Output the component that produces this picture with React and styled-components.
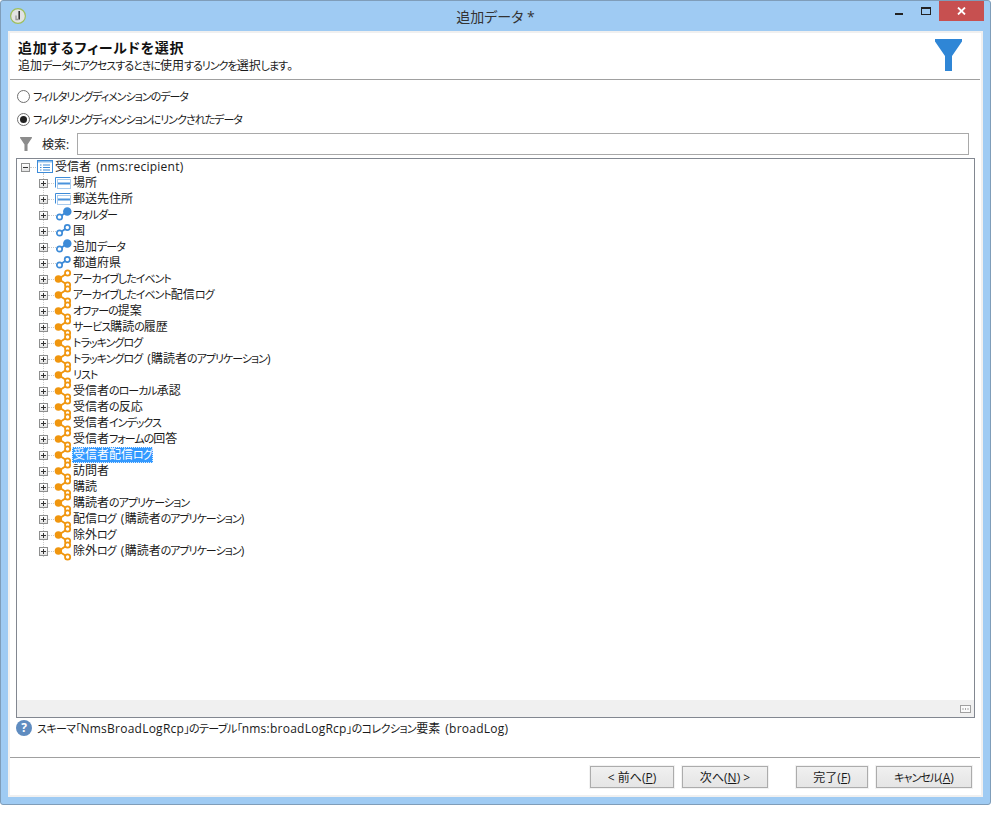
import React from 'react';
import styled, { createGlobalStyle } from 'styled-components';

const GlobalStyle = createGlobalStyle`
  html, body {
    margin: 0;
    padding: 0;
    background: #fff;
  }
  body {
    font-family: "Open Sans", "Noto Sans CJK JP", sans-serif;
    font-size: 12px;
    color: #1a1a1a;
    font-feature-settings: "palt";
  }
`;

const Window = styled.div`
  box-sizing: border-box;
  width: 991px;
  height: 805px;
  display: flex;
  flex-direction: column;
  background: #9fcbf3;
  border: 1px solid #7f9db9;
  border-radius: 3px;
  padding: 0 7px 7px;
`;

const TitleBar = styled.div`
  height: 30px;
  flex: none;
  display: grid;
  grid-template-columns: 1fr auto 1fr;
  align-items: center;
`;

const AppIcon = styled.span`
  display: flex;
  margin-left: 2px;
`;

const TitleText = styled.div`
  font-size: 14px;
  color: #333;
`;

const WinButtons = styled.div`
  display: flex;
  align-self: flex-start;
  justify-self: end;
  margin-right: -1px;
`;

const WinBtn = styled.div`
  width: 27px;
  height: 20px;
  display: flex;
  align-items: center;
  justify-content: center;
`;

const CloseBtn = styled(WinBtn)`
  width: 45px;
  background: #c75050;
`;

const Panel = styled.div`
  flex: 1;
  min-height: 0;
  display: flex;
  flex-direction: column;
  background: #fff;
  border: 2px solid #f0f0f0;
`;

const Header = styled.div`
  box-sizing: border-box;
  height: 47px;
  flex: none;
  display: flex;
  justify-content: space-between;
  border-bottom: 1px solid #a0a0a0;
  padding-left: 8px;
  margin-right: 1px;
`;

const HeaderText = styled.div`
  padding-top: 5px;
`;

const Heading = styled.div`
  font-size: 14px;
  line-height: 20px;
  font-weight: 700;
  letter-spacing: 0.7px;
  color: #111;
`;

const SubHeading = styled.div`
  font-size: 12px;
  line-height: 16px;
`;

const FunnelBox = styled.div`
  padding: 6px 18px 0 0;
`;

const Body = styled.div`
  flex: 1;
  min-height: 0;
  display: flex;
  flex-direction: column;
  padding: 0 6px;
`;

const RadioRow = styled.label`
  height: 22px;
  display: flex;
  align-items: center;
  gap: 3px;
  padding-left: 1px;
  flex: none;
  margin-top: ${({ first }) => (first ? '5px' : '1px')};
`;

const RadioDot = styled.span`
  box-sizing: border-box;
  width: 13px;
  height: 13px;
  border: 1px solid #707070;
  border-radius: 50%;
  background: #fff;
  display: flex;
  align-items: center;
  justify-content: center;
  flex: none;
  &::after {
    content: '';
    width: 7px;
    height: 7px;
    border-radius: 50%;
    background: ${({ checked }) => (checked ? '#222' : 'transparent')};
  }
`;

const SearchRow = styled.div`
  height: 22px;
  display: flex;
  align-items: center;
  padding-right: 6px;
  flex: none;
  margin-top: 3px;
`;

const SearchFunnel = styled.span`
  width: 13px;
  display: flex;
  margin-left: 4px;
`;

const SearchLabel = styled.span`
  margin-left: 9px;
  width: 35px;
  flex: none;
`;

const SearchInput = styled.div`
  box-sizing: border-box;
  flex: 1;
  height: 22px;
  border: 1px solid #a9a9a9;
  background: #fff;
`;

const TreeBox = styled.div`
  box-sizing: border-box;
  height: 560px;
  margin-top: 3px;
  flex: none;
  border: 1px solid #828790;
  display: flex;
  flex-direction: column;
`;

const TreeScroll = styled.div`
  flex: 1;
  min-height: 0;
  position: relative;
  overflow: hidden;
`;

const GuideLine = styled.div`
  position: absolute;
  left: 26px;
  top: 14px;
  height: 384px;
  border-left: 1px dotted #c8c8c8;
`;

const TreeRow = styled.div`
  height: 16px;
  display: flex;
  align-items: center;
  position: relative;
  padding-left: ${({ child }) => (child ? '22px' : '4px')};
  white-space: nowrap;
  word-spacing: 2px;
  &::before {
    content: '';
    position: absolute;
    left: ${({ child }) => (child ? '31px' : '13px')};
    top: 8px;
    width: 8px;
    border-top: 1px dotted #c8c8c8;
  }
`;

const Expander = styled.span`
  box-sizing: border-box;
  width: 9px;
  height: 9px;
  border: 1px solid #8e8f8f;
  background: linear-gradient(#fff, #e3e3e3);
  position: relative;
  flex: none;
  margin-right: 7px;
  z-index: 1;
  &::before {
    content: '';
    position: absolute;
    left: 1px;
    top: 3px;
    width: 5px;
    height: 1px;
    background: #333;
  }
  &::after {
    content: '';
    position: absolute;
    left: 3px;
    top: 1px;
    width: 1px;
    height: 5px;
    background: #333;
    display: ${({ open }) => (open ? 'none' : 'block')};
  }
`;

const IconSlot = styled.span`
  width: 17px;
  height: 16px;
  flex: none;
  position: relative;
  z-index: 1;
  svg {
    position: absolute;
    left: 0;
    top: -1px;
    overflow: visible;
  }
`;

const RowLabel = styled.span`
  display: block;
  height: 16px;
  line-height: 16px;
  padding: 0 1px;
  position: relative;
  z-index: 2;
  ${({ selected }) =>
    selected &&
    `
    background: #3399ff;
    color: #fff;
    outline: 1px dotted #d8ecff;
    outline-offset: -1px;
  `}
`;

const Kana = styled.span`
  font-size: 11px;
  letter-spacing: ${({ tight }) => (tight ? '-0.6px' : '-1px')};
`;

const Latin = styled.span`
  letter-spacing: 0.25px;
`;

const StatusBand = styled.div`
  height: 17px;
  flex: none;
  background: #f0f0f0;
  display: flex;
  justify-content: flex-end;
  align-items: center;
  padding-right: 3px;
`;

const MoreBtn = styled.span`
  display: flex;
`;

const HelpRow = styled.div`
  display: flex;
  align-items: center;
  gap: 5px;
  height: 20px;
  white-space: pre;
  word-spacing: 2px;
  flex: none;
`;

const HelpIcon = styled.span`
  width: 16px;
  height: 16px;
  border-radius: 50%;
  background: #5f8cc0;
  color: #fff;
  font-weight: 700;
  font-size: 12px;
  line-height: 16px;
  text-align: center;
  flex: none;
`;

const Footer = styled.div`
  box-sizing: border-box;
  height: 38px;
  flex: none;
  border-top: 1px solid #a0a0a0;
  display: flex;
  align-items: flex-start;
  justify-content: flex-end;
  padding: 8px 8px 0 0;
  margin: auto 1px 0 0;
`;

const Button = styled.button`
  box-sizing: border-box;
  width: ${({ w }) => w}px;
  height: 22px;
  margin-left: ${({ gap }) => gap}px;
  padding: 0;
  border: 1px solid #acacac;
  box-shadow: 0 0 0 1px #f2f2f2;
  background: linear-gradient(#f0f0f0, #e5e5e5);
  font: inherit;
  color: #1a1a1a;
  font-feature-settings: "palt";
  u {
    text-underline-offset: 1px;
  }
`;

const rows = [
  ['場所', 'record'],
  ['郵送先住所', 'record'],
  ['フォルダー', 'linkFill'],
  ['国', 'link'],
  ['追加データ', 'linkFill'],
  ['都道府県', 'link'],
  ['アーカイブしたイベント', 'multi'],
  ['アーカイブしたイベント配信ログ', 'multi'],
  ['オファーの提案', 'multi'],
  ['サービス購読の履歴', 'multi'],
  ['トラッキングログ', 'multi'],
  ['トラッキングログ (購読者のアプリケーション)', 'multi'],
  ['リスト', 'multi'],
  ['受信者のローカル承認', 'multi'],
  ['受信者の反応', 'multi'],
  ['受信者インデックス', 'multi'],
  ['受信者フォームの回答', 'multi'],
  ['受信者配信ログ', 'multi', true],
  ['訪問者', 'multi'],
  ['購読', 'multi'],
  ['購読者のアプリケーション', 'multi'],
  ['配信ログ (購読者のアプリケーション)', 'multi'],
  ['除外ログ', 'multi'],
  ['除外ログ (購読者のアプリケーション)', 'multi'],
];

// the original UI font has narrow kana, so kana runs get squeezed
function Jp({ text, tight }) {
  const parts = text.split(/([\u3040-\u30ff「」]+|[\x21-\x7e][\x20-\x7e]*)/).filter(Boolean);
  return parts.map((part, i) => {
    if (/^[\u3040-\u30ff「」]/.test(part)) return <Kana tight={tight} key={i}>{part}</Kana>;
    if (/^[\x21-\x7e]/.test(part)) return <Latin key={i}>{part}</Latin>;
    return part;
  });
}

function Funnel({ width, height, color }) {
  return (
    <svg width={width} height={height} viewBox="0 0 27 32">
      <path d="M0 0H27V2.5L17 17V32H10V17L0 2.5Z" fill={color} />
    </svg>
  );
}

function LogoIcon() {
  return (
    <svg width="16" height="16" viewBox="0 0 16 16">
      <circle cx="8" cy="8" r="7.4" fill="#e2e2e2" stroke="#9dbf5c" strokeWidth="1.2" />
      <path d="M9.2 3V11.5" stroke="#333" strokeWidth="1.6" />
      <path d="M6 7.5V11.5H8.5" fill="none" stroke="#999" strokeWidth="1.3" />
    </svg>
  );
}

function TableIcon() {
  return (
    <svg width="16" height="16" viewBox="0 0 16 16">
      <rect x="0.5" y="2.5" width="15" height="12" fill="#fff" stroke="#3d8bd8" />
      <rect x="1" y="3" width="14" height="1.5" fill="#8dbdea" />
      <path d="M3 7H4.5M3 9.5H4.5M3 12H4.5M6 7H13M6 9.5H13M6 12H13" stroke="#3d8bd8" />
    </svg>
  );
}

function RecordIcon() {
  return (
    <svg width="16" height="16" viewBox="0 0 16 16">
      <path d="M0.5 13.5V3.5H15.5" fill="none" stroke="#3d8bd8" />
      <rect x="2.5" y="5.5" width="13" height="9" fill="#fff" stroke="#a8cbee" />
      <rect x="3" y="8.5" width="12" height="2" fill="#4a93dc" />
    </svg>
  );
}

function LinkIcon({ filled }) {
  return (
    <svg width="16" height="16" viewBox="0 0 16 16">
      <path d="M4.5 11L12.3 5.5" stroke="#3d8bd8" strokeWidth="1.8" />
      <circle cx="4.5" cy="11" r="2.7" fill="#fff" stroke="#3d8bd8" strokeWidth="1.7" />
      <circle cx="12.3" cy="5.5" r={filled ? 3.4 : 2.6} fill={filled ? '#3d8bd8' : '#fff'} stroke="#3d8bd8" strokeWidth="1.7" />
    </svg>
  );
}

function MultiIcon() {
  return (
    <svg width="16" height="18" viewBox="0 0 16 18">
      <path d="M3.5 9L12.5 3M3.5 9L12.5 15" stroke="#f0960f" strokeWidth="2" />
      <circle cx="3.4" cy="9" r="3.7" fill="#f0960f" />
      <circle cx="12.6" cy="3" r="2.6" fill="#fff" stroke="#f0960f" strokeWidth="1.8" />
      <circle cx="12.6" cy="15" r="2.6" fill="#fff" stroke="#f0960f" strokeWidth="1.8" />
    </svg>
  );
}

function RowIcon({ kind }) {
  if (kind === 'record') return <RecordIcon />;
  if (kind === 'link') return <LinkIcon />;
  if (kind === 'linkFill') return <LinkIcon filled />;
  return <MultiIcon />;
}

export default function App() {
  return (
    <>
      <GlobalStyle />
      <Window>
        <TitleBar>
          <AppIcon>
            <LogoIcon />
          </AppIcon>
          <TitleText>追加データ *</TitleText>
          <WinButtons>
            <WinBtn>
              <svg width="10" height="10" viewBox="0 0 10 10">
                <rect x="1" y="7" width="8" height="2" fill="#222" />
              </svg>
            </WinBtn>
            <WinBtn>
              <svg width="10" height="8" viewBox="0 0 10 8">
                <rect x="0.5" y="0.5" width="9" height="7" fill="none" stroke="#222" />
                <rect x="0" y="0" width="10" height="2" fill="#222" />
              </svg>
            </WinBtn>
            <CloseBtn>
              <svg width="9" height="8" viewBox="0 0 9 8">
                <path d="M1 0.5L8 7.5M8 0.5L1 7.5" stroke="#fff" strokeWidth="1.8" />
              </svg>
            </CloseBtn>
          </WinButtons>
        </TitleBar>
        <Panel>
          <Header>
            <HeaderText>
              <Heading>追加するフィールドを選択</Heading>
              <SubHeading>
                <Jp text="追加データにアクセスするときに使用するリンクを選択します。" />
              </SubHeading>
            </HeaderText>
            <FunnelBox>
              <Funnel width={27} height={32} color="#2f86d6" />
            </FunnelBox>
          </Header>
          <Body>
            <RadioRow first>
              <RadioDot />
              <span><Jp text="フィルタリングディメンションのデータ" /></span>
            </RadioRow>
            <RadioRow>
              <RadioDot checked />
              <span><Jp text="フィルタリングディメンションにリンクされたデータ" /></span>
            </RadioRow>
            <SearchRow>
              <SearchFunnel>
                <Funnel width={12} height={14} color="#8c8c8c" />
              </SearchFunnel>
              <SearchLabel>検索:</SearchLabel>
              <SearchInput />
            </SearchRow>
            <TreeBox>
              <TreeScroll>
                <GuideLine />
                <TreeRow>
                  <Expander open />
                  <IconSlot>
                    <TableIcon />
                  </IconSlot>
                  <RowLabel>受信者 <Latin>(nms:recipient)</Latin></RowLabel>
                </TreeRow>
                {rows.map(([label, kind, selected]) => (
                  <TreeRow child key={label}>
                    <Expander />
                    <IconSlot>
                      <RowIcon kind={kind} />
                    </IconSlot>
                    <RowLabel selected={selected}><Jp text={label} /></RowLabel>
                  </TreeRow>
                ))}
              </TreeScroll>
              <StatusBand>
                <MoreBtn>
                  <svg width="11" height="8" viewBox="0 0 11 8">
                    <rect x="0.5" y="0.5" width="10" height="7" fill="#fafafa" stroke="#a0a0a0" />
                    <path d="M2.5 4H3.5M5 4H6M7.5 4H8.5" stroke="#555" />
                  </svg>
                </MoreBtn>
              </StatusBand>
            </TreeBox>
            <HelpRow>
              <HelpIcon>?</HelpIcon>
              <span><Jp tight text="スキーマ「NmsBroadLogRcp」のテーブル「nms:broadLogRcp」のコレクション要素 (broadLog)" /></span>
            </HelpRow>
          </Body>
          <Footer>
            <Button w={84} gap={0}>&lt; 前へ(<u>P</u>)</Button>
            <Button w={86} gap={8}>次へ(<u>N</u>) &gt;</Button>
            <Button w={72} gap={28}>完了(<u>F</u>)</Button>
            <Button w={96} gap={8}><Jp text="キャンセル" />(<u>A</u>)</Button>
          </Footer>
        </Panel>
      </Window>
    </>
  );
}
